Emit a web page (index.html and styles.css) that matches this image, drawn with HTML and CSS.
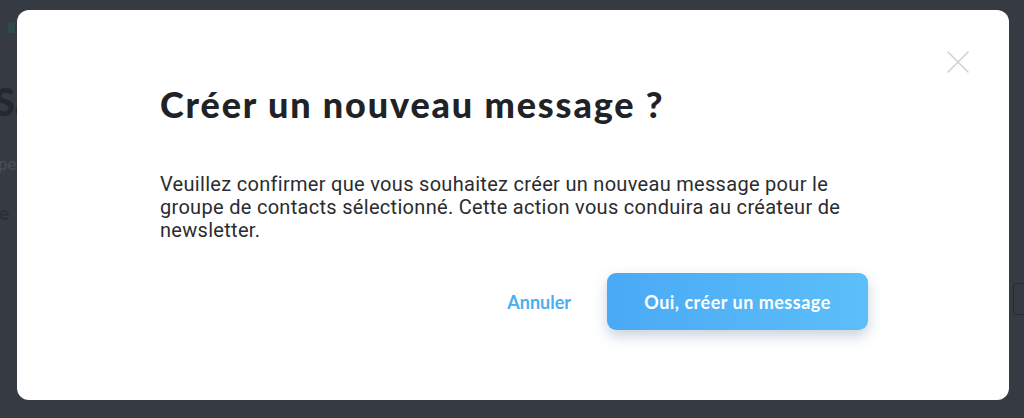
FILE: index.html
```html
<!DOCTYPE html>
<html lang="fr">
<head>
<meta charset="utf-8">
<title>Créer un nouveau message</title>
<link rel="stylesheet" href="styles.css">
</head>
<body>
<div class="page">
  <div class="page-tag"></div>
  <div class="page-title">Sa</div>
  <div class="page-text">pe</div>
  <div class="page-label">e</div>
  <div class="page-side"></div>
</div>

<div class="overlay">
  <div class="modal" role="dialog">
    <button class="close" aria-label="Fermer">
      <svg width="22" height="22" viewBox="0 0 22 22"><path d="M1 1 L21 21 M21 1 L1 21" stroke="#cfd1d4" stroke-width="1.6" fill="none" stroke-linecap="round"/></svg>
    </button>
    <div class="modal-body">
      <h1 class="modal-title">Créer un nouveau message ?</h1>
      <p class="modal-text">Veuillez confirmer que vous souhaitez créer un nouveau message pour le groupe de contacts sélectionné. Cette action vous conduira au créateur de newsletter.</p>
      <div class="modal-actions">
        <button class="btn-link">Annuler</button>
        <button class="btn-primary">Oui, créer un message</button>
      </div>
    </div>
  </div>
</div>
</body>
</html>
```

FILE: styles.css
```css
html, body {
  margin: 0;
  padding: 0;
  height: 100%;
}
body {
  background: #363b43;
  font-family: Roboto, "Liberation Sans", sans-serif;
  overflow: hidden;
}
.page {
  position: relative;
  height: 100%;
}
.page-tag {
  position: absolute;
  left: 8px;
  top: 22px;
  width: 7px;
  height: 11px;
  background: #2f4a4a;
}
.page-title {
  position: absolute;
  left: -6px;
  top: 78px;
  font-family: Lato, sans-serif;
  font-weight: 900;
  font-size: 38px;
  color: #24282e;
}
.page-text {
  position: absolute;
  left: -2px;
  top: 154px;
  font-size: 17px;
  color: #4a4f57;
}
.page-label {
  position: absolute;
  left: -1px;
  top: 202px;
  font-size: 19px;
  font-weight: 700;
  color: #2c3036;
}
.page-side {
  position: absolute;
  left: 1013px;
  top: 283px;
  width: 10px;
  height: 30px;
  border: 1px solid #262a30;
  border-radius: 3px;
}
.overlay {
  position: fixed;
  inset: 0;
}
.modal {
  position: absolute;
  left: 17px;
  top: 10px;
  width: 992px;
  height: 390px;
  background: #ffffff;
  border-radius: 12px;
  box-sizing: border-box;
}
.close {
  position: absolute;
  right: 40px;
  top: 41px;
  width: 22px;
  height: 22px;
  padding: 0;
  border: 0;
  background: none;
  cursor: pointer;
}
.close svg { display: block; }
.modal-body {
  padding: 72px 141px 0 143px;
}
.modal-title {
  margin: 0;
  font-family: Lato, "Open Sans", sans-serif;
  font-weight: 900;
  font-size: 36px;
  line-height: 44px;
  letter-spacing: 1.85px;
  color: #202226;
}
.modal-text {
  margin: 47px 0 0;
  font-family: Roboto, sans-serif;
  font-size: 20px;
  line-height: 23px;
  letter-spacing: 0.3px;
  color: #2a2c30;
  max-width: 690px;
}
.modal-actions {
  display: flex;
  justify-content: flex-end;
  align-items: center;
  gap: 36px;
  margin-top: 31px;
}
.btn-link {
  border: 0;
  background: none;
  padding: 0;
  font-family: Lato, sans-serif;
  font-weight: 700;
  font-size: 18px;
  color: #4aaef2;
  cursor: pointer;
}
.btn-primary {
  width: 261px;
  height: 57px;
  border: 0;
  border-radius: 9px;
  background: linear-gradient(90deg, #4aa9f5 0%, #5cbff9 100%);
  box-shadow: 0 6px 14px rgba(60, 90, 130, 0.28);
  color: #ffffff;
  font-family: Lato, sans-serif;
  font-weight: 700;
  font-size: 18px;
  letter-spacing: 0.5px;
  cursor: pointer;
}
```
